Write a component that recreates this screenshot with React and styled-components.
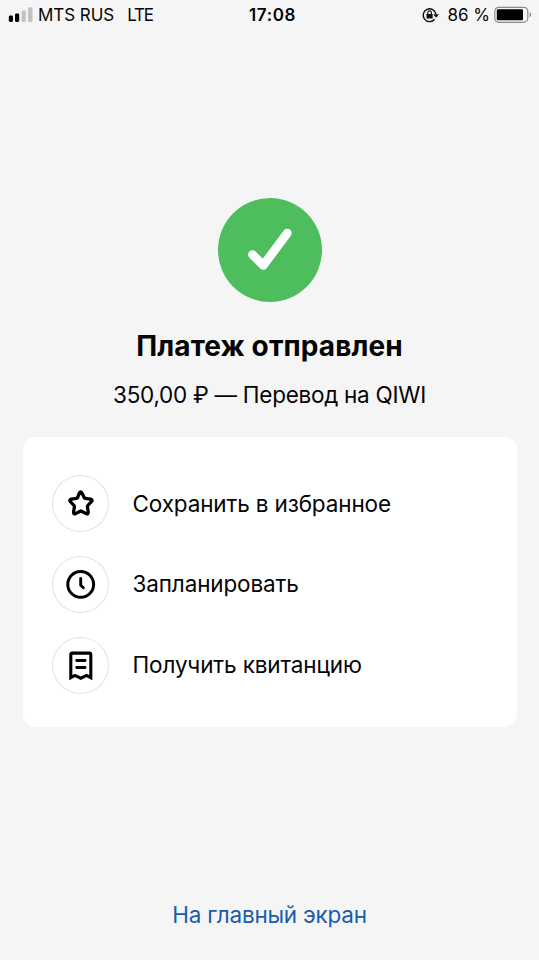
import React from 'react';
import styled, { createGlobalStyle } from 'styled-components';

const GlobalStyle = createGlobalStyle`
  * {
    box-sizing: border-box;
  }

  body {
    margin: 0;
    background: #f5f5f5;
  }
`;

const Screen = styled.div`
  display: flex;
  flex-direction: column;
  height: 960px;
  background: #f5f5f5;
  color: #050505;
  font-family: Inter, "Liberation Sans", sans-serif;
`;

const StatusBar = styled.header`
  display: grid;
  grid-template-columns: 1fr auto 1fr;
  align-items: center;
  height: 30px;
  padding: 0 6px 0 8px;
  font-size: 17px;
  line-height: 30px;
  white-space: nowrap;
`;

const StatusGroup = styled.div`
  display: flex;
  align-items: center;
  justify-content: ${({ $end }) => ($end ? 'flex-end' : 'flex-start')};
`;

const Carrier = styled.span`
  margin-left: 5px;
  letter-spacing: -0.05px;
`;

const Network = styled.span`
  margin-left: 13px;
  letter-spacing: -1.2px;
`;

const Time = styled.span`
  padding-left: 4px;
  font-weight: 600;
  letter-spacing: 0.6px;
`;

const Percent = styled.span`
  margin: 0 4px 0 8.5px;
`;

const Result = styled.main`
  display: flex;
  flex-direction: column;
  align-items: center;
  padding-top: 168.4px;
`;

const SuccessMark = styled.div`
  width: 104px;
  height: 104px;
  border-radius: 50%;
  background: #4dbd5e;

  svg {
    display: block;
  }
`;

const Title = styled.h1`
  margin: 25.6px 0 0;
  font-size: 28px;
  font-weight: 700;
  line-height: 36px;
  letter-spacing: 0.1px;
`;

const Summary = styled.p`
  margin: 16px 0 0;
  font-size: 22.5px;
  line-height: 30px;
  letter-spacing: -0.27px;
`;

const Card = styled.section`
  display: flex;
  flex-direction: column;
  gap: 23.6px;
  height: 289.7px;
  margin: 27.4px 22px 0 23px;
  padding: 38px 29px;
  border-radius: 13px;
  background: #fff;
`;

const Action = styled.button`
  display: flex;
  align-items: center;
  gap: 23.5px;
  padding: 0;
  border: 0;
  background: none;
  color: inherit;
  font: inherit;
  text-align: left;
`;

const IconCircle = styled.span`
  display: flex;
  flex: none;
  width: 57px;
  height: 57px;
  border-radius: 50%;
  box-shadow: inset 0 0 0 1px #e2e2e2;
`;

const ActionLabel = styled.span`
  font-size: 22.5px;
  line-height: 30px;
  letter-spacing: -0.14px;
`;

const HomeLink = styled.button`
  align-self: center;
  margin: auto 0 30px;
  padding: 0;
  border: 0;
  background: none;
  color: #1a5cab;
  font-family: inherit;
  font-size: 22.5px;
  line-height: 30px;
  letter-spacing: -0.22px;
`;

const SignalIcon = () => (
  <svg width="25" height="16" viewBox="0 0 25 16">
    <rect x="0.8" y="8.5" width="4.2" height="6.5" rx="1.4" fill="#000" />
    <rect x="7" y="6.5" width="4.2" height="8.5" rx="1.4" fill="#000" />
    <rect x="13.6" y="3.6" width="4.2" height="11.4" rx="1.4" fill="#c3c3c3" />
    <rect x="20" y="0.2" width="4.5" height="14.8" rx="1.4" fill="#c3c3c3" />
  </svg>
);

const RotationLockIcon = () => (
  <svg width="18" height="16" viewBox="0 0 18 16" fill="none">
    <path d="M13.6 12.2A6.4 6.4 0 1 1 14.9 7.2" stroke="#111" strokeWidth="1.4" />
    <path d="M12.2 7.2h5.7l-2.8 3.5z" fill="#111" />
    <rect x="5.5" y="7" width="6.2" height="4.6" rx="0.6" fill="#111" />
    <path d="M6.8 7.2V5.7a1.8 1.8 0 0 1 3.6 0v1.5" stroke="#111" strokeWidth="1.1" />
  </svg>
);

const BatteryIcon = () => (
  <svg width="39" height="18" viewBox="0 0 39 18" fill="none">
    <rect x="0.8" y="1.3" width="33" height="15" rx="4" stroke="#8b8b8b" strokeWidth="1.2" />
    <rect x="2.8" y="3.3" width="26.2" height="11" rx="1.2" fill="#000" />
    <path d="M35.6 6.3c2.2.8 2.2 4.2 0 5z" fill="#8b8b8b" />
  </svg>
);

const CheckIcon = () => (
  <svg width="104" height="104" viewBox="0 0 104 104" fill="none">
    <path
      d="M34.5 56.6 45.3 67.3 69.3 35.1"
      stroke="#fff"
      strokeWidth="8.8"
      strokeLinecap="round"
      strokeLinejoin="round"
    />
  </svg>
);

const StarIcon = () => (
  <svg width="57" height="57" viewBox="0 0 57 57" fill="none">
    <path
      d="M27.3 18q1.3-2.1 2.6 0l2.3 4.6q.4.7 1.1.8l5.2.8q2.5.6.9 2.4l-3.6 3.9q-.5.6-.4 1.3l.8 5.1q.2 2.6-2 1.7l-4.6-2.4q-.7-.4-1.4 0l-4.6 2.4q-2.2.9-2-1.7l.8-5.1q.1-.7-.4-1.3l-3.6-3.9q-1.6-1.8.9-2.4l5.2-.8q.7-.1 1.1-.8z"
      stroke="#000"
      strokeWidth="3.3"
      strokeLinejoin="round"
    />
  </svg>
);

const ClockIcon = () => (
  <svg width="57" height="57" viewBox="0 0 57 57" fill="none" stroke="#000">
    <circle cx="28.7" cy="28.4" r="12.9" strokeWidth="3" />
    <path d="M28.7 22.4v6.8l2.7 2.6" strokeWidth="2.9" strokeLinecap="round" strokeLinejoin="round" />
  </svg>
);

const ReceiptIcon = () => (
  <svg width="57" height="57" viewBox="0 0 57 57" fill="none" stroke="#000">
    <path
      d="M18.8 40.6V17.7q0-1.6 1.6-1.6h16.8q1.6 0 1.6 1.6v22.9l-4.2-2.2-5.8 2.8-5.8-2.8z"
      strokeWidth="3.1"
    />
    <path d="M24.7 23.5h8.4M24.7 30.5h8.4" strokeWidth="2.8" strokeLinecap="round" />
  </svg>
);

const actions = [
  { label: 'Сохранить в избранное', icon: StarIcon },
  { label: 'Запланировать', icon: ClockIcon },
  { label: 'Получить квитанцию', icon: ReceiptIcon },
];

const App = () => {
  return (
    <Screen>
      <GlobalStyle />
      <StatusBar>
        <StatusGroup>
          <SignalIcon />
          <Carrier>MTS RUS</Carrier>
          <Network>LTE</Network>
        </StatusGroup>
        <Time>17:08</Time>
        <StatusGroup $end>
          <RotationLockIcon />
          <Percent>86 %</Percent>
          <BatteryIcon />
        </StatusGroup>
      </StatusBar>

      <Result>
        <SuccessMark>
          <CheckIcon />
        </SuccessMark>
        <Title>Платеж отправлен</Title>
        <Summary>350,00 ₽ — Перевод на QIWI</Summary>
      </Result>

      <Card>
        {actions.map(({ label, icon: Icon }) => (
          <Action key={label}>
            <IconCircle>
              <Icon />
            </IconCircle>
            <ActionLabel>{label}</ActionLabel>
          </Action>
        ))}
      </Card>

      <HomeLink>На главный экран</HomeLink>
    </Screen>
  );
};

export default App;
